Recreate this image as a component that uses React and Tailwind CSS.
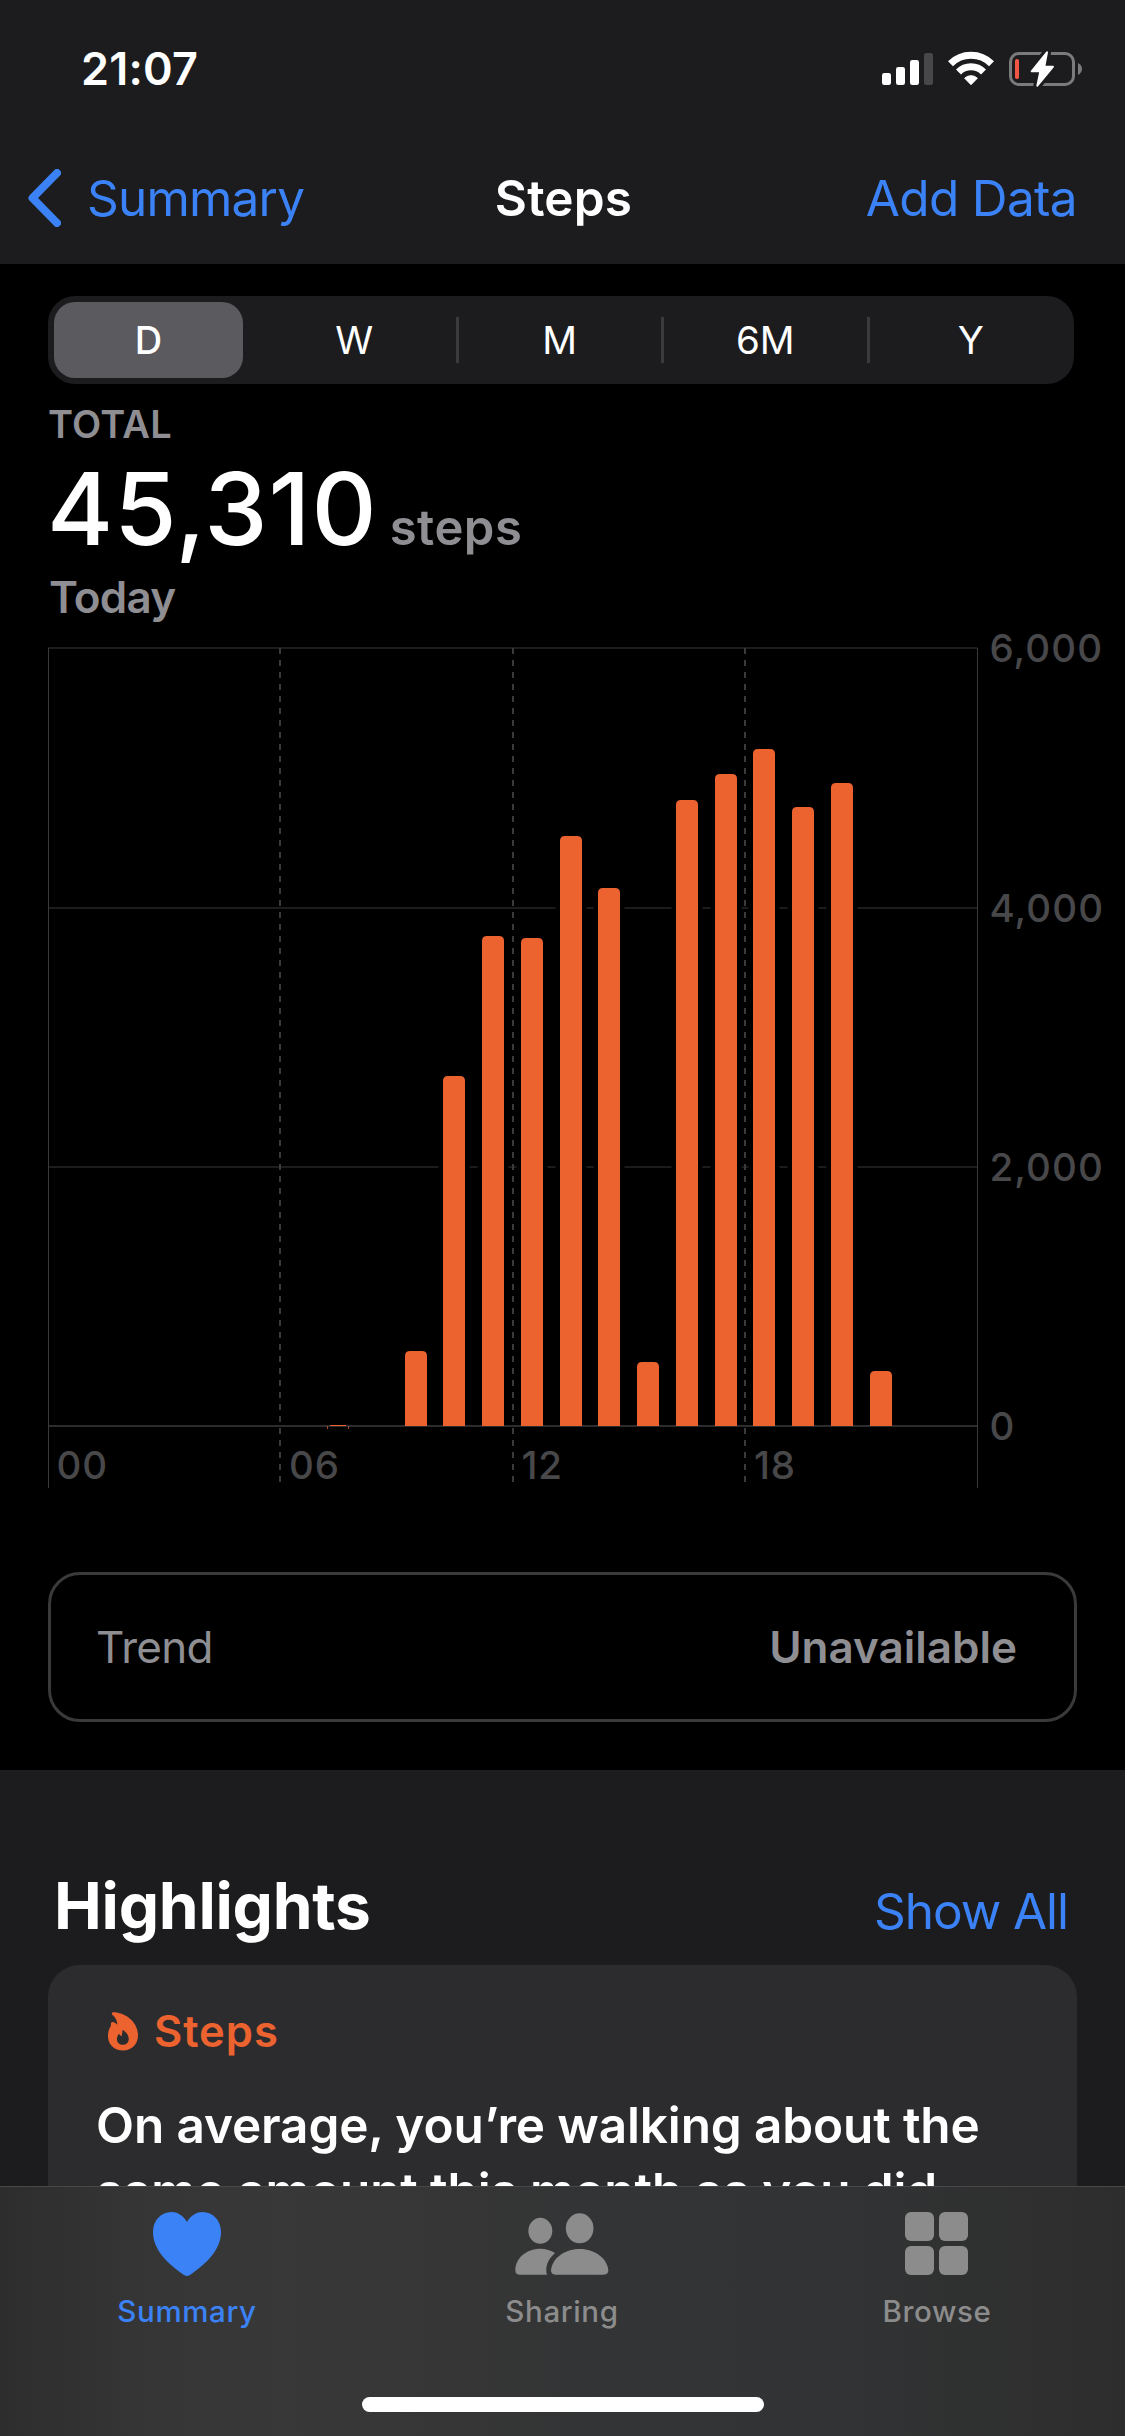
import { useState } from "react";

const RANGES = ["W", "M", "6M", "Y"];

// plot area of the chart
const LEFT = 48;
const RIGHT = 977.5;
const TOP = 648;
const BASE = 1426;

const BARS = [
  { x: 405, y: 1351 },
  { x: 443, y: 1076 },
  { x: 482, y: 936 },
  { x: 521, y: 938 },
  { x: 560, y: 836 },
  { x: 598, y: 888 },
  { x: 637, y: 1362 },
  { x: 676, y: 800 },
  { x: 715, y: 774 },
  { x: 753, y: 749 },
  { x: 792, y: 807 },
  { x: 831, y: 783 },
  { x: 870, y: 1371 },
];

const Y_LABELS = [
  { text: "6,000", y: 648 },
  { text: "4,000", y: 908 },
  { text: "2,000", y: 1167 },
  { text: "0", y: 1426 },
];

const HOURS = [
  { text: "00", x: 56.5 },
  { text: "06", x: 289 },
  { text: "12", x: 521.5 },
  { text: "18", x: 754 },
];

const barPath = (x, y) =>
  `M${x} ${BASE}V${y + 5}q0 -5 5 -5h12q5 0 5 5V${BASE}z`;

const StatusIcons = () => (
  <svg className="w-[200px] h-[36px]" viewBox="36 33 600 108" fill="none">
    <g fill="#fff">
      <rect x="36" y="99" width="27" height="36" rx="7" />
      <rect x="78" y="81" width="27" height="54" rx="7" />
      <rect x="120" y="60" width="27" height="75" rx="7" />
      <rect x="162" y="39" width="27" height="96" rx="7" fill="#48484a" />
    </g>

    {/* wifi */}
    <g stroke="#fff" strokeWidth="21">
      <path d="M241.5 71.5A87 87 0 0 1 364.5 71.5" />
      <path d="M265.5 96A53 53 0 0 1 340.5 96" />
    </g>
    <path
      d="M303 134L284 114.5A28 28 0 0 1 322 114.5Z"
      fill="#fff"
      stroke="#fff"
      strokeWidth="3"
      strokeLinejoin="round"
    />

    {/* battery */}
    <rect x="421.5" y="40.5" width="189" height="93" rx="25" stroke="#7b7b7d" strokeWidth="9" />
    <path d="M624 69C632 73 636 80 636 87S632 101 624 105Z" fill="#7b7b7d" />
    <rect x="435" y="57" width="12" height="60" rx="5" fill="#f05545" />
    <path
      d="M531 37L485 94H511L502 137L549 80H523Z"
      fill="#fff"
      stroke="#1c1c1e"
      strokeWidth="24"
      strokeLinejoin="round"
    />
    <path
      d="M531 37L485 94H511L502 137L549 80H523Z"
      fill="#fff"
      stroke="#fff"
      strokeWidth="6"
      strokeLinejoin="round"
    />
  </svg>
);

const Header = () => (
  <header className="h-[264px] shrink-0 bg-[#1c1c1e]">
    <div className="h-[132px] flex justify-between items-start pl-[81px] pr-[43px]">
      <span className="pt-[44px] text-[45px] leading-[50px] font-semibold tracking-[0.2px]">
        21:07
      </span>
      <div className="pt-[51px]">
        <StatusIcons />
      </div>
    </div>

    <div className="h-[132px] grid grid-cols-3 items-center pl-[28px] pr-[48px] text-[49.5px] leading-[60px]">
      <button className="flex items-center text-[#3b82f6]">
        <svg className="w-[33px] h-[58px]" viewBox="0 0 33 58" fill="none">
          <path
            d="M29 4L4.5 29L29 54"
            stroke="currentColor"
            strokeWidth="8"
            strokeLinecap="round"
            strokeLinejoin="round"
          />
        </svg>
        <span className="ml-[26px] tracking-[-0.8px]">Summary</span>
      </button>
      <h1 className="font-semibold text-center pl-[22px] tracking-[0.15px]">Steps</h1>
      <button className="text-right text-[#3b82f6] tracking-[-0.66px]">Add Data</button>
    </div>
  </header>
);

const RangePicker = ({ value, onChange }) => (
  <div className="mt-[32px] ml-[48px] w-[1026px] h-[88px] pl-[6px] flex items-center rounded-[27px] bg-[#1c1c1e] text-[38px] leading-[46px]">
    <button
      onClick={() => onChange("D")}
      className="w-[189px] h-[76px] rounded-[21px] bg-[#5b5a5f] font-medium"
    >
      D
    </button>
    <div className="ml-[10px] -mr-px flex flex-1 items-center">
      {RANGES.map((r) => (
        <button
          key={r}
          onClick={() => onChange(r)}
          className="flex-1 h-[46px] text-[38.5px] border-r-[3px] border-[#3a3a3c] last:border-transparent"
          aria-pressed={value === r}
        >
          {r}
        </button>
      ))}
    </div>
  </div>
);

const StepsChart = () => (
  <svg className="mt-px w-[1125px] h-[888px] block" viewBox="0 624 1125 888" fill="none">
    {/* horizontal grid */}
    <g stroke="#1c1c1e" strokeWidth="2">
      <path d={`M${LEFT} ${TOP}H${RIGHT}`} />
      <path d={`M${LEFT} 908H${RIGHT}`} />
      <path d={`M${LEFT} 1167H${RIGHT}`} />
    </g>

    {/* the bars keep a dark margin where they cross the grid */}
    {BARS.map((b) => (
      <rect key={b.x} x={b.x - 4.5} y={b.y - 4} width="31" height={BASE - b.y} fill="#000" />
    ))}

    {/* 6 hour marks */}
    <g stroke="#3a3a3c" strokeWidth="2" strokeDasharray="6 6">
      <path d={`M280 ${TOP}V1482`} />
      <path d={`M513 ${TOP}V1482`} />
      <path d={`M745 ${TOP}V1482`} />
    </g>

    <path d={`M${LEFT} ${BASE}H${RIGHT}`} stroke="#2c2c2e" strokeWidth="2" />
    <path d={`M48.5 ${TOP}V1488M977.5 ${TOP}V1488`} stroke="#3a3a3c" />

    <g fill="#ed6330">
      {BARS.map((b) => (
        <path key={b.x} d={barPath(b.x, b.y)} />
      ))}
      <rect x="330" y="1425" width="16" height="1" />
      <rect x="327" y="1426" width="1" height="3" opacity="0.7" />
      <rect x="348" y="1426" width="1" height="3" opacity="0.7" />
    </g>

    <g className="fill-[#48484a] text-[38.5px] font-medium">
      {Y_LABELS.map((l) => (
        <text key={l.text} x="989.5" y={l.y + 14} className="tracking-[1.1px]">
          {l.text}
        </text>
      ))}
      {HOURS.map((h) => (
        <text key={h.text} x={h.x} y="1479" className="tracking-[0.8px]">
          {h.text}
        </text>
      ))}
    </g>
  </svg>
);

const Highlights = () => (
  <section className="h-[760px] bg-[#1c1c1e] pt-[96px] px-[48px]">
    <div className="h-[80px] flex justify-between items-baseline pl-[6px] pr-[9px] leading-[80px]">
      <h2 className="text-[64px] font-bold tracking-[-0.26px]">Highlights</h2>
      <button className="text-[49.5px] leading-[60px] text-[#3b82f6] tracking-[-1.05px]">
        Show All
      </button>
    </div>

    <div className="mt-[19px] h-[400px] rounded-[32px] bg-[#2c2c2e] pt-[41px] pl-[48px]">
      <div className="flex items-center pl-[12px] text-[#ed6330]">
        <svg className="w-[30px] h-[39px]" viewBox="54 48 91 117" fill="currentColor">
          <path
            fillRule="evenodd"
            d="M71 48C104 48 145 76 145 118C145 146 126 164 100 164C73 164 54 146 54 120C54 107 58 97 63 89C62 84 63 79 67 78C72 78 77 81 82 86C83 75 77 65 67 56C64 52 66 48 71 48ZM98 101C106 106 117 116 117 129C117 140 109 147 99 147C89 147 81 140 81 130C81 123 84 118 87 113C89 115 91 118 95 121C97 114 98 108 98 101Z"
          />
        </svg>
        <span className="ml-[16px] text-[43.5px] leading-[50px] font-semibold tracking-[0.95px]">
          Steps
        </span>
      </div>
      <p className="mt-[36px] text-[49.5px] leading-[66px] font-semibold tracking-[-0.13px]">
        On average, you’re walking about the
        <br />
        same amount this month as you did
      </p>
    </div>
  </section>
);

const HeartIcon = () => (
  <svg className="w-[68px] h-[64px]" viewBox="0 0 68 64" fill="currentColor">
    <path d="M34 10C30 3 24 0 18.5 0C8 0 0 8.5 0 20C0 36 12 50 31 63Q34 65 37 63C56 50 68 36 68 20C68 8.5 60 0 49.5 0C44 0 38 3 34 10Z" />
  </svg>
);

const PeopleIcon = () => (
  <svg className="w-[94px] h-[62px]" viewBox="44 52 282 186" fill="currentColor">
    <ellipse cx="120" cy="105.5" rx="36" ry="39" />
    <ellipse cx="238" cy="98" rx="41.5" ry="45" />
    <path d="M57 237C49 237 45 233 45 224C45 188 78 159 120 159C137 159 152 164 164 172C145 189 137 207 138 226Q138 232 140 237Z" />
    <path d="M166 237C156 237 152 232 152 224C155 190 190 160 238 160C286 160 321 190 324 224C324 232 320 237 310 237Z" />
  </svg>
);

const GridIcon = () => (
  <div className="grid grid-cols-2 gap-[5px] mr-px mb-px">
    <i className="w-[29px] h-[29px] rounded-[6px] bg-current" />
    <i className="w-[29px] h-[29px] rounded-[6px] bg-current" />
    <i className="w-[29px] h-[29px] rounded-[6px] bg-current" />
    <i className="w-[29px] h-[29px] rounded-[6px] bg-current" />
  </div>
);

const TABS = [
  { name: "Summary", icon: HeartIcon },
  { name: "Sharing", icon: PeopleIcon },
  { name: "Browse", icon: GridIcon },
];

const TabBar = () => (
  <nav className="h-[250px] shrink-0 border-t border-[#48484a] bg-[linear-gradient(to_right,#2d2d2d,#353535_12%,#383838_25%,#363636_38%,#333435_52%,#323334_75%,#2d2d2d)]">
    <div className="grid grid-cols-3 pt-[25px]">
      {TABS.map(({ name, icon: Icon }) => (
        <button
          key={name}
          className={`flex flex-col items-center pr-[1px] ${
            name === "Summary" ? "text-[#3b82f6]" : "text-[#8c8c8c]"
          }`}
        >
          <span className="h-[64px] flex items-center">
            <Icon />
          </span>
          <span className="mt-[17px] text-[29.5px] leading-[36px] font-medium tracking-[0.65px]">
            {name}
          </span>
        </button>
      ))}
    </div>
    <div className="mt-[68px] mx-auto w-[402px] h-[15px] rounded-full bg-white" />
  </nav>
);

export default function App() {
  const [range, setRange] = useState("D");

  return (
    <div className="w-[1125px] h-[2436px] flex flex-col overflow-hidden bg-black text-white font-['Inter','Liberation_Sans',sans-serif]">
      <Header />

      <main className="flex-1 min-h-0 overflow-hidden">
        <RangePicker value={range} onChange={setRange} />

        <div className="pl-[48px] font-semibold text-[#8e8e93]">
          <p className="mt-[17px] text-[38px] leading-[46px] tracking-[0.2px]">TOTAL</p>
          <p className="mt-[6px] mb-[8px] h-[110px] flex items-baseline">
            <span className="-ml-px text-[101px] leading-[110px] font-medium text-white tracking-[1px]">
              45,310
            </span>
            <span className="ml-[12px] text-[49px] leading-[60px] tracking-[0.5px]">steps</span>
          </p>
          <p className="pl-px text-[44px] leading-[52px] tracking-[-0.8px]">Today</p>
        </div>

        <StepsChart />

        <div className="mt-[60px] mx-[48px] h-[150px] pl-[45px] pr-[57px] flex items-center justify-between border-[3px] border-[#3a3a3c] rounded-[32px] text-[44px] leading-[52px] text-[#8e8e93]">
          <span className="tracking-[-0.7px]">Trend</span>
          <span className="font-semibold">Unavailable</span>
        </div>

        <div className="mt-[48px]">
          <Highlights />
        </div>
      </main>

      <TabBar />
    </div>
  );
}
